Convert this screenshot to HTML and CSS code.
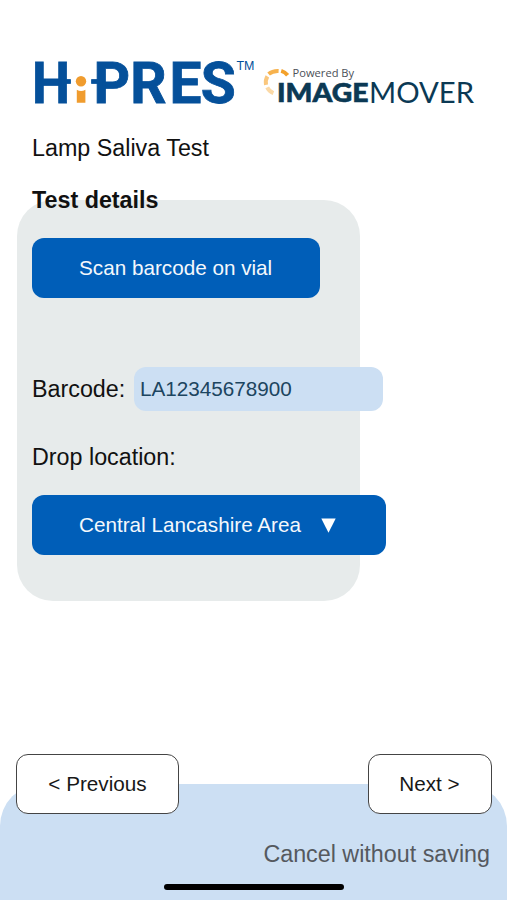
FILE: index.html
```html
<!DOCTYPE html>
<html lang="en">
<head>
<meta charset="utf-8">
<meta name="viewport" content="width=device-width, initial-scale=1">
<title>Lamp Saliva Test</title>
<link rel="stylesheet" href="styles.css">
</head>
<body>
<div class="screen">
  <header class="brand">
    <svg class="brand-hipres" width="224" height="76" viewBox="32 44 224 76" role="img" aria-label="HiPRES">
      <g class="hipres-word">
        <text x="32" y="102.6" textLength="38" lengthAdjust="spacingAndGlyphs">H</text>
        <text x="93.6 130.2 169.4 200.7" y="102.6">PRES</text>
        <path d="M64 79.5h6.5v4H64zM91.5 79.5h8v4h-8z"/>
      </g>
      <g class="hipres-i">
        <circle cx="81" cy="81.3" r="5.2"/>
        <path d="M76.8 89.8q4.2 2.4 8.6 0v12.9h-8.6z"/>
      </g>
      <text class="hipres-tm" x="236.4" y="70" textLength="18" lengthAdjust="spacingAndGlyphs">TM</text>
    </svg>
    <svg class="brand-mover" width="216" height="76" viewBox="260 44 216 76" role="img" aria-label="Powered By ImageMover">
      <g class="mover-arc">
        <path class="arc-1" d="M281.2 70.9Q285 72 287.6 75.2"/>
        <path class="arc-2" d="M268.6 74Q272.6 70.6 278.6 70.9"/>
        <path class="arc-3" d="M266 84.8Q265.2 80 267.4 76.4"/>
        <path class="arc-4" d="M273.4 93.2Q269 91.4 267.2 87.4"/>
      </g>
      <text class="mover-by" x="292.6" y="76.6" textLength="61.5" lengthAdjust="spacingAndGlyphs">Powered By</text>
      <text class="mover-bold" x="277" y="102.3" textLength="91.5" lengthAdjust="spacingAndGlyphs">IMAGE</text>
      <text class="mover-light" x="369" y="102.5" textLength="105" lengthAdjust="spacingAndGlyphs">MOVER</text>
    </svg>
  </header>
  <h1 class="title">Lamp Saliva Test</h1>
  <main class="panel">
    <h2 class="panel-heading">Test details</h2>
    <button class="btn btn-scan">Scan barcode on vial</button>
    <div class="barcode-row">
      <label for="barcode">Barcode:</label>
      <input id="barcode" class="barcode-input" value="LA12345678900">
    </div>
    <p class="drop-label">Drop location:</p>
    <button class="btn btn-select">Central Lancashire Area
      <svg class="caret" width="15" height="15" viewBox="0 0 15 15"><path d="M.3.5h14.4L7.5 14.7z"/></svg>
    </button>
  </main>
  <footer class="footer">
    <nav class="nav">
      <button class="nav-btn nav-prev">&lt; Previous</button>
      <button class="nav-btn nav-next">Next &gt;</button>
    </nav>
    <a class="cancel">Cancel without saving</a>
    <div class="home-bar"></div>
  </footer>
</div>
</body>
</html>
```
FILE: styles.css
```css
* {
  box-sizing: border-box;
}

body {
  margin: 0;
  background: #fff;
  color: #111;
  font: 23.3px/28px "Liberation Sans", Arial, sans-serif;
}

h1, h2, p {
  margin: 0;
}

button, input {
  font: 20.7px/28px "Liberation Sans", Arial, sans-serif;
  border: 0;
  border-radius: 12px;
}

.screen {
  display: flex;
  flex-direction: column;
  width: 507px;
  height: 900px;
  overflow: hidden;
}

.brand {
  display: flex;
  gap: 4px;
  padding: 44px 0 0 32px;
}

.brand svg {
  display: block;
  flex: none;
}

.hipres-word {
  fill: #05509a;
  stroke: #05509a;
  stroke-width: 0.8;
  font: 700 56.8px Roboto, sans-serif;
}

.hipres-i {
  fill: #f09c2e;
}

.hipres-tm {
  fill: #05509a;
  font: 13px "Liberation Sans", sans-serif;
}

.mover-arc {
  fill: none;
  stroke-width: 4;
}

.arc-1 { stroke: #f3a12b; }
.arc-2 { stroke: #f7b24d; }
.arc-3 { stroke: #fac77d; }
.arc-4 { stroke: #fbd9a6; }

.mover-by {
  fill: #4b5058;
  font: 11px "Open Sans", sans-serif;
}

.mover-bold,
.mover-light {
  fill: #0b3954;
  font-family: Lato, sans-serif;
}

.mover-bold {
  font-size: 27px;
  font-weight: 900;
  stroke: #0b3954;
  stroke-width: 0.6;
}

.mover-light {
  font-size: 28.5px;
  font-weight: 400;
}

.title {
  margin: 14px 0 0 32px;
  font-size: 23.3px;
  font-weight: 400;
}

.panel {
  width: 343px;
  height: 401px;
  margin: 38px 0 0 17px;
  padding-left: 15px;
  border-radius: 36px;
  background: #e7ebeb;
}

.panel-heading {
  margin-top: -14px;
  font-size: 23.3px;
}

.btn {
  display: flex;
  align-items: center;
  height: 60px;
  padding: 0 47px;
  background: #005eb8;
  color: #f4f8fc;
  white-space: nowrap;
}

.btn-scan {
  width: 288px;
  margin-top: 24px;
}

.barcode-row {
  display: flex;
  align-items: center;
  justify-content: space-between;
  width: 351px;
  margin-top: 68.5px;
}

.barcode-input {
  width: 249px;
  height: 44px;
  padding: 0 6px;
  background: #ccdff3;
  color: #1c4560;
}

.drop-label {
  margin-top: 32.5px;
}

.btn-select {
  gap: 20px;
  width: 354px;
  margin-top: 24px;
}

.caret {
  fill: #fff;
}

.footer {
  display: flex;
  flex-direction: column;
  height: 116px;
  margin-top: auto;
  border-radius: 42px 42px 0 0;
  background: #ccdff3;
}

.nav {
  display: flex;
  justify-content: space-between;
  margin: -30px 15.5px 0 16px;
}

.nav-btn {
  height: 60px;
  padding: 0;
  border: 1.4px solid #444;
  background: #fff;
  color: #181818;
}

.nav-prev {
  width: 163px;
}

.nav-next {
  width: 124px;
}

.cancel {
  align-self: flex-end;
  margin: 26px 17px 0 0;
  color: #55595f;
}

.home-bar {
  width: 180px;
  height: 6px;
  margin: 16px auto 0 164px;
  border-radius: 3px;
  background: #000;
}
```
